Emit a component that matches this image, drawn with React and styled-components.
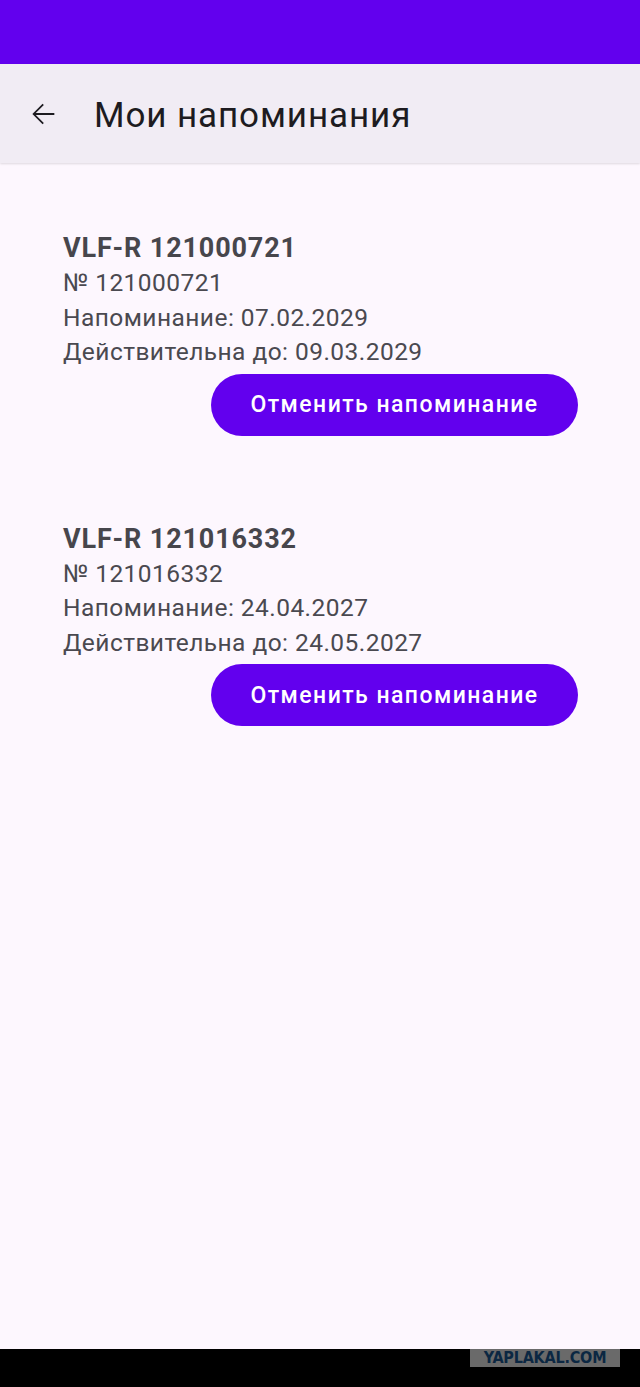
import React from "react";
import styled, { createGlobalStyle } from "styled-components";

const GlobalStyle = createGlobalStyle`
  html, body {
    margin: 0;
    padding: 0;
    background: #fdf7fe;
    font-family: Roboto, "Noto Sans", "Liberation Sans", sans-serif;
  }
`;

const Screen = styled.div`
  width: 640px;
  height: 1387px;
  display: flex;
  flex-direction: column;
  background: #fdf7fe;
`;

const StatusBar = styled.div`
  height: 64px;
  background: #6200ee;
  flex-shrink: 0;
`;

const TopBar = styled.div`
  height: 99px;
  background: #f1ecf4;
  display: flex;
  align-items: center;
  box-shadow: 0 1px 2px rgba(0, 0, 0, 0.12);
  flex-shrink: 0;
  position: relative;
  z-index: 1;
`;

const BackButton = styled.button`
  width: 34px;
  height: 34px;
  margin-left: 26px;
  padding: 0;
  border: none;
  background: none;
  display: flex;
  align-items: center;
  justify-content: center;
  color: #1d1b20;
`;

const Title = styled.h1`
  margin: 3px 0 0 34px;
  font-size: 35px;
  font-weight: 400;
  color: #1d1b20;
  letter-spacing: 0.9px;
`;

const Content = styled.div`
  flex: 1;
  display: flex;
  flex-direction: column;
  gap: 85px;
  padding: 67px 62px 0 63px;
`;

const Card = styled.div`
  display: flex;
  flex-direction: column;
`;

const CardTitle = styled.div`
  font-size: 27px;
  font-weight: 700;
  line-height: 36px;
  letter-spacing: 0.85px;
  color: #47464c;
`;

const Line = styled.div`
  font-size: 24.5px;
  line-height: 34.5px;
  letter-spacing: 0.45px;
  color: #4a4950;
`;

const CancelButton = styled.button`
  align-self: flex-end;
  margin-top: 4px;
  width: 367px;
  height: 62px;
  border: none;
  border-radius: 31px;
  background: #6200ee;
  color: #ffffff;
  font-family: Roboto, "Noto Sans", sans-serif;
  font-size: 23px;
  font-weight: 500;
  letter-spacing: 1.45px;
`;

const NavBar = styled.div`
  height: 38px;
  background: #000;
  flex-shrink: 0;
  position: relative;
`;

const Watermark = styled.div`
  position: absolute;
  top: 0;
  right: 20px;
  width: 150px;
  height: 18px;
  background: #6a6a6a;
  color: #0b2742;
  font-family: "DejaVu Sans Condensed", "DejaVu Sans", sans-serif;
  font-weight: 700;
  font-size: 16px;
  line-height: 18px;
  text-align: center;
  letter-spacing: -0.2px;
`;

const reminders = [
  { id: "121000721", remind: "07.02.2029", valid: "09.03.2029" },
  { id: "121016332", remind: "24.04.2027", valid: "24.05.2027" },
];

export default function App() {
  return (
    <>
      <GlobalStyle />
      <Screen>
        <StatusBar />
        <TopBar>
          <BackButton aria-label="Назад">
            <svg width="34" height="34" viewBox="0 0 24 24" fill="currentColor">
              <path d="M20 11.3H6.9l5.7-5.7-0.9-0.9L4.5 12l7.2 7.3 0.9-0.9-5.7-5.7H20v-1.4z" />
            </svg>
          </BackButton>
          <Title>Мои напоминания</Title>
        </TopBar>
        <Content>
          {reminders.map((r) => (
            <Card key={r.id}>
              <CardTitle>VLF-R {r.id}</CardTitle>
              <Line>№ {r.id}</Line>
              <Line>Напоминание: {r.remind}</Line>
              <Line>Действительна до: {r.valid}</Line>
              <CancelButton>Отменить напоминание</CancelButton>
            </Card>
          ))}
        </Content>
        <NavBar>
          <Watermark>YAPLAKAL.COM</Watermark>
        </NavBar>
      </Screen>
    </>
  );
}
